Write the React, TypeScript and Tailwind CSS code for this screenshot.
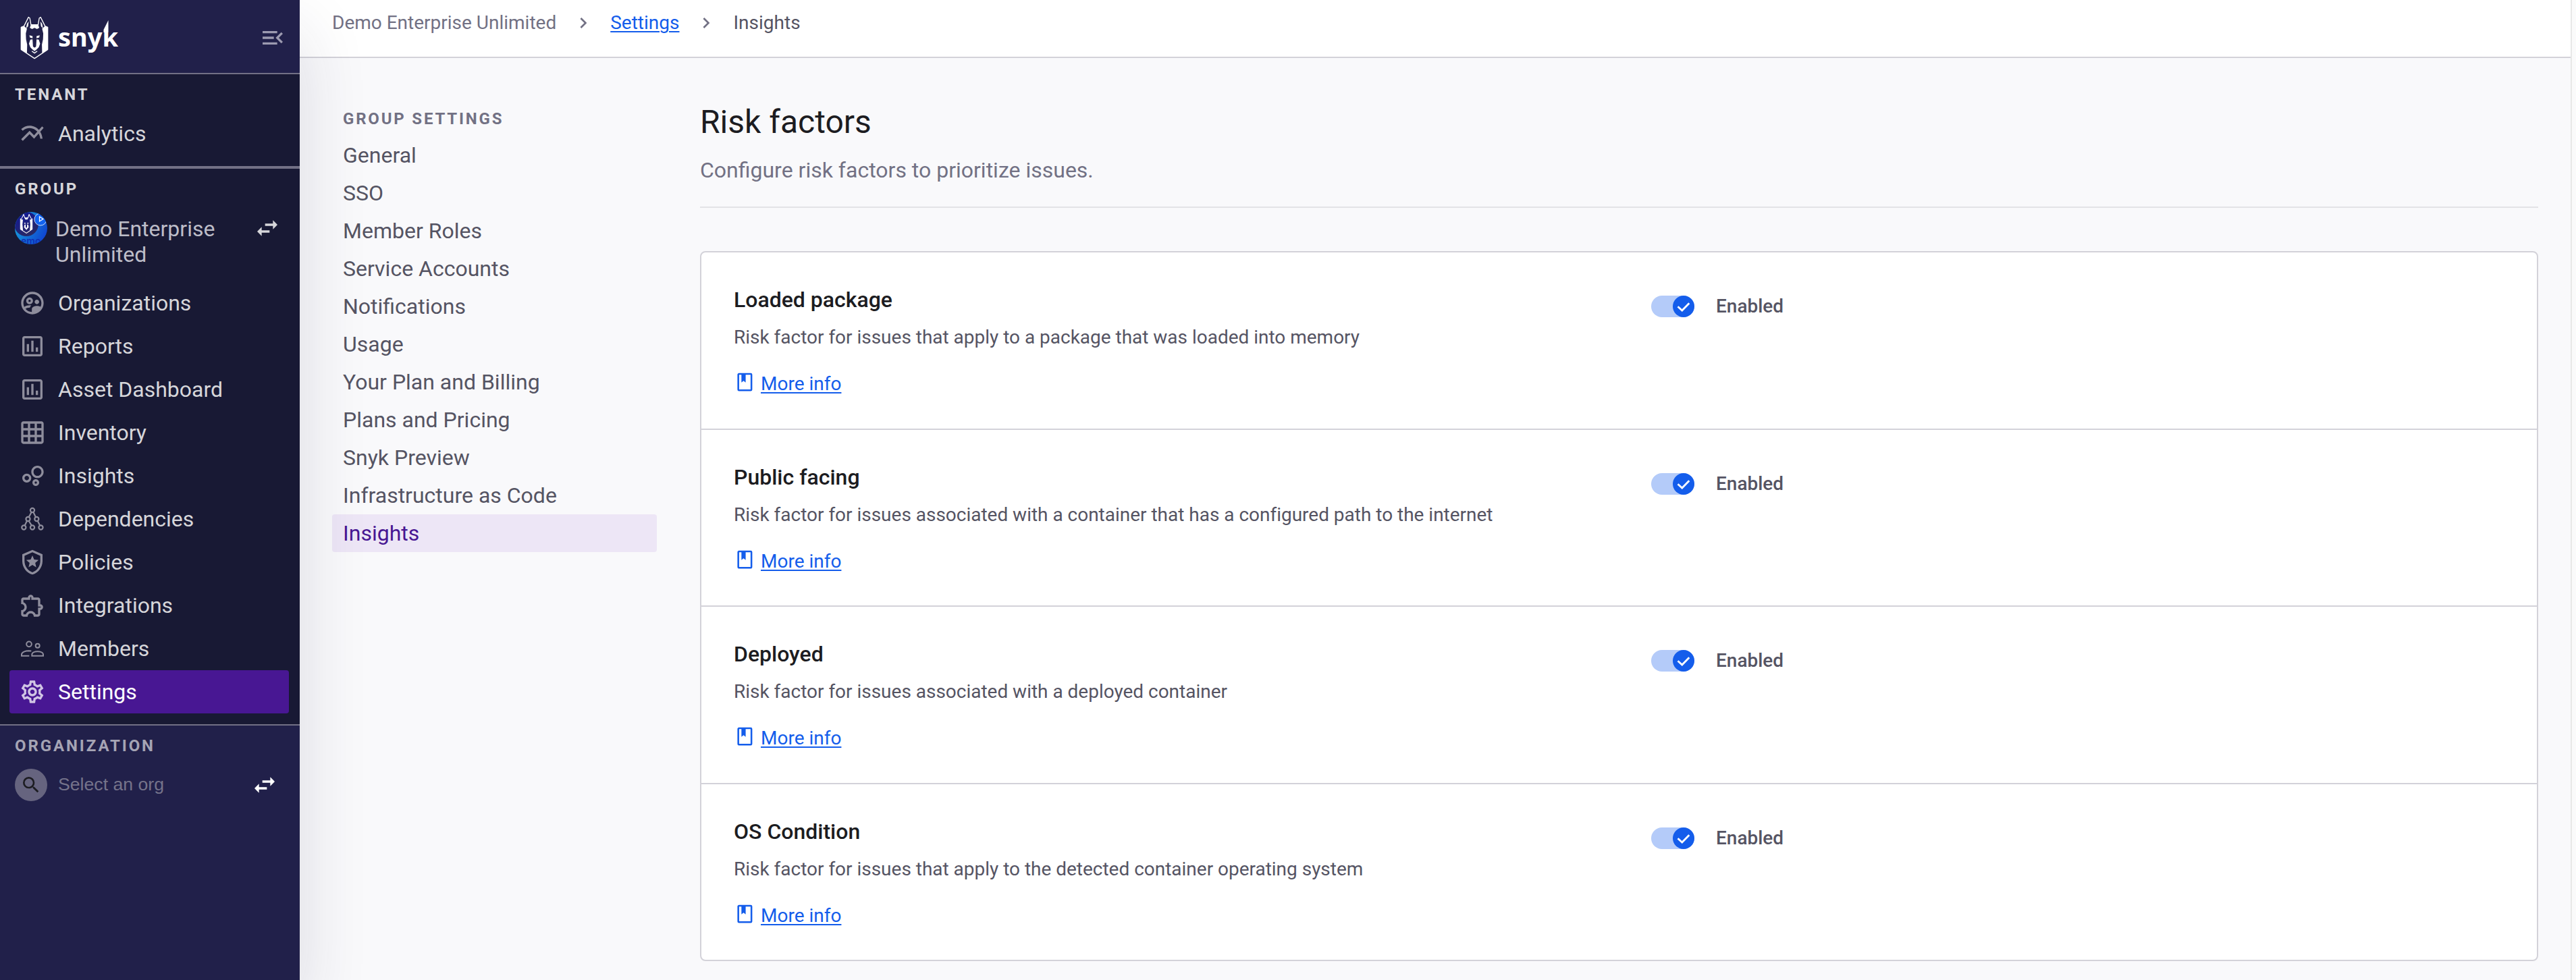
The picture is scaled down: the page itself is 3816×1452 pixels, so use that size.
import React from "react";
import type { IconType } from "react-icons";
import {
  MdChevronRight,
  MdGridOn,
  MdMenuOpen,
  MdMultilineChart,
  MdOutlineBubbleChart,
  MdOutlineExtension,
  MdOutlineInsertChartOutlined,
  MdOutlineLocalPolice,
  MdOutlineSettings,
  MdOutlineSupervisedUserCircle,
  MdSearch,
  MdSwapHoriz,
} from "react-icons/md";

function Hound({ className }: { className?: string }) {
  return (
    <svg viewBox="91 73 127 193" className={className} fill="none" aria-hidden="true">
      <path d="M95 122 L108 117 L128 77 L134 82 L139 111 H171 L176 82 L182 77 L202 117 L214 122 V222 L155 262 L95 222 Z" stroke="#fff" strokeWidth="4" strokeLinejoin="round" />
      <path d="M95 122 L109 117 L121 129 L116 150 L117 176 L122 200 L121 238 L95 222 Z" fill="#fff" />
      <path d="M214 122 L201 117 L189 129 L194 150 L193 176 L188 200 L189 238 L214 222 Z" fill="#fff" />
      <path d="M117 128 L121 107 L129 96 L126 118 Z M193 128 L189 107 L181 96 L184 118 Z" fill="#fff" />
      <path d="M138 112 H172 L176 125 L166 130 L155 125 L144 130 L134 125 Z" fill="#fff" />
      <path d="M132 158 L146 162 V172 L134 168 Z M178 158 L164 162 V172 L176 168 Z" fill="#fff" />
      <path d="M136 178 L146 176 L148 208 Q155 218 162 208 L164 176 L174 178 L180 196 L174 212 L166 220 L155 229 L144 220 L136 212 L130 196 Z" fill="#fff" />
      <path d="M143 229 L155 238 L167 229" stroke="#fff" strokeWidth="4" />
    </svg>
  );
}

function DependencyTree({ className }: { className?: string }) {
  return (
    <svg viewBox="0 0 24 24" className={className} fill="none" stroke="currentColor" strokeWidth="1.3" aria-hidden="true">
      <path d="M11.1 6 L8.9 10.2 M12.9 6 L14.9 10.2 M7.1 13.8 L5.3 17.6 M8.9 13.8 L11.2 17.6 M16.7 13.8 L18.6 17.6" />
      <circle cx="12" cy="4.2" r="1.85" />
      <circle cx="8.1" cy="12" r="1.85" />
      <circle cx="15.8" cy="12" r="1.85" />
      <circle cx="4.4" cy="19.5" r="1.85" />
      <circle cx="12" cy="19.5" r="1.85" />
      <circle cx="19.5" cy="19.5" r="1.85" />
    </svg>
  );
}

function MembersIcon({ className }: { className?: string }) {
  return (
    <svg viewBox="0 0 24 24" className={className} fill="none" stroke="currentColor" strokeWidth="1.2" aria-hidden="true">
      <circle cx="9" cy="8" r="2.3" />
      <circle cx="16.6" cy="9.4" r="1.8" />
      <path d="M9.2 18.4 H2.4 V17.2 C2.4 15 6 13.9 8.8 13.9 L11 14.1" />
      <path d="M11.6 18.4 V17.3 C11.6 15.4 14.2 14.5 16.6 14.5 S21.6 15.4 21.6 17.3 V18.4 Z" />
    </svg>
  );
}

function BookIcon({ className }: { className?: string }) {
  return (
    <svg viewBox="0 0 24 24" className={className} aria-hidden="true">
      <rect x="5" y="3" width="14.6" height="18.2" rx="0.8" fill="none" stroke="currentColor" strokeWidth="1.9" />
      <path d="M8.5 3 H13.2 V12.6 L10.85 10.6 L8.5 12.6 Z" fill="currentColor" />
    </svg>
  );
}

function Wordmark() {
  return (
    <div className="relative ml-[14px] h-[60px] font-['Noto_Sans',sans-serif] text-[38px] leading-[60px] font-bold text-white">
      snyk
      <svg viewBox="0 0 30 24" className="absolute top-0 right-0 h-6 w-[30px]" aria-hidden="true">
        <path d="M4 0 H30 V24 H6 L4 24 Z" fill="#21204a" />
        <path d="M8.5 24 V20 L15.5 6 V24 Z" fill="#fff" />
      </svg>
    </div>
  );
}

function Avatar() {
  return (
    <svg viewBox="0 0 48 48" className="size-12 shrink-0" aria-hidden="true">
      <defs>
        <clipPath id="avatar-clip">
          <circle cx="24" cy="24" r="24" />
        </clipPath>
        <linearGradient id="avatar-bg" x1="0" y1="0.3" x2="1" y2="0.8">
          <stop offset="0" stopColor="#17a0dc" />
          <stop offset="1" stopColor="#0f3fd0" />
        </linearGradient>
        <linearGradient id="avatar-disc" x1="0.2" y1="0" x2="0.7" y2="1">
          <stop offset="0" stopColor="#10189a" />
          <stop offset="1" stopColor="#2a2a60" />
        </linearGradient>
      </defs>
      <g clipPath="url(#avatar-clip)">
        <rect width="48" height="48" fill="url(#avatar-bg)" />
        <circle cx="17" cy="18" r="18" fill="url(#avatar-disc)" />
        <text x="9" y="47.5" fontFamily="Inter, sans-serif" fontSize="14" fontWeight="600" fill="#1030b4">emo</text>
        <circle cx="38" cy="11" r="9" fill="#1263f0" stroke="#fff" strokeWidth="0.8" />
        <path d="M36.5 7 L42 10.5 L36.5 14 Z" fill="none" stroke="#fff" strokeWidth="1.2" />
        <svg x="7.5" y="3" width="19" height="29" viewBox="91 73 127 193">
          <path d="M95 122 L108 117 L128 77 L139 111 H171 L182 77 L202 117 L214 122 V222 L155 262 L95 222 Z" fill="none" stroke="#fff" strokeWidth="7" />
          <path d="M95 122 L121 129 L116 176 L122 238 L95 222 Z M214 122 L189 129 L194 176 L189 238 L214 222 Z M138 112 H172 L166 128 H144 Z" fill="#fff" />
          <path d="M134 160 h12 v10 h-12z M164 160 h12 v10 h-12z M136 180 L147 176 L149 208 H161 L163 176 L174 180 L178 205 L155 232 L132 205 Z" fill="#fff" />
        </svg>
      </g>
    </svg>
  );
}

type IconLike = IconType | React.ComponentType<{ className?: string }>;

function NavRow({ icon: Icon, label, active }: { icon: IconLike; label: string; active?: boolean }) {
  return (
    <a className={`mr-4 ml-3.5 flex h-16 items-center rounded pl-3.5 text-[32px] ${active ? "bg-[#481793] text-white" : "text-[#d6d6da]"}`}>
      <Icon className={`size-10 shrink-0 ${active ? "text-[#d0c4e4]" : "text-[#8e8d9c]"}`} />
      <span className="ml-[18px] whitespace-nowrap">{label}</span>
    </a>
  );
}

function SectionLabel({ children, className }: { children: string; className: string }) {
  return <h2 className={`h-7 text-2xl leading-7 font-bold whitespace-nowrap ${className}`}>{children}</h2>;
}

const groupNav: { icon: IconLike; label: string; active?: boolean }[] = [
  { icon: MdOutlineSupervisedUserCircle, label: "Organizations" },
  { icon: MdOutlineInsertChartOutlined, label: "Reports" },
  { icon: MdOutlineInsertChartOutlined, label: "Asset Dashboard" },
  { icon: MdGridOn, label: "Inventory" },
  { icon: MdOutlineBubbleChart, label: "Insights" },
  { icon: DependencyTree, label: "Dependencies" },
  { icon: MdOutlineLocalPolice, label: "Policies" },
  { icon: MdOutlineExtension, label: "Integrations" },
  { icon: MembersIcon, label: "Members" },
  { icon: MdOutlineSettings, label: "Settings", active: true },
];

const settingsNav = [
  "General",
  "SSO",
  "Member Roles",
  "Service Accounts",
  "Notifications",
  "Usage",
  "Your Plan and Billing",
  "Plans and Pricing",
  "Snyk Preview",
  "Infrastructure as Code",
  "Insights",
];

const riskFactors = [
  { name: "Loaded package", description: "Risk factor for issues that apply to a package that was loaded into memory" },
  { name: "Public facing", description: "Risk factor for issues associated with a container that has a configured path to the internet" },
  { name: "Deployed", description: "Risk factor for issues associated with a deployed container" },
  { name: "OS Condition", description: "Risk factor for issues that apply to the detected container operating system" },
];

function Sidebar() {
  return (
    <aside className="z-10 flex w-[444px] shrink-0 flex-col bg-[#21204a] shadow-[0_48px_96px_rgba(33,32,74,0.14)]">
      <div className="flex h-[110px] items-center border-b-2 border-[#727085] pl-[30px]">
        <Hound className="mt-1 h-16 w-[42px]" />
        <Wordmark />
        <MdMenuOpen className="mt-1 mr-5 ml-auto size-10 text-[#9c9ab0]" />
      </div>

      <section className="border-b-4 border-[#727085] bg-[#181934] pt-4 pb-4">
        <SectionLabel className="mb-3 pl-[22px] tracking-[2.9px] text-[#d6d6da]">TENANT</SectionLabel>
        <NavRow icon={MdMultilineChart} label="Analytics" />
      </section>

      <section className="border-b-2 border-[#727085] bg-[#181934] pt-4 pb-4">
        <SectionLabel className="pl-[22px] tracking-[2.9px] text-[#d6d6da]">GROUP</SectionLabel>
        <div className="mt-5 mb-[21px] flex h-[82px] items-start pl-[22px]">
          <Avatar />
          <span className="mt-1.5 ml-3 w-[260px] text-[32px] leading-[38px] text-[#bdbdc8]">Demo Enterprise Unlimited</span>
          <MdSwapHoriz className="mt-1 mr-7 ml-auto size-10 text-[#d6d6da]" />
        </div>
        <nav className="flex flex-col">
          {groupNav.map((item) => (
            <NavRow key={item.label} {...item} />
          ))}
        </nav>
      </section>

      <section className="pt-4">
        <SectionLabel className="pl-[22px] tracking-[2.9px] text-[#a5a4b4]">ORGANIZATION</SectionLabel>
        <div className="mt-5 flex h-12 items-center pl-[22px]">
          <span className="flex size-12 shrink-0 items-center justify-center rounded-full bg-[#66647f] text-[#1c1c21]">
            <MdSearch className="size-8" />
          </span>
          <span className="ml-4 pb-0.5 font-['Liberation_Sans',sans-serif] text-[26.67px] text-[#75738a]">Select an org</span>
          <MdSwapHoriz className="mr-8 ml-auto size-10 text-white" />
        </div>
      </section>
    </aside>
  );
}

function Breadcrumbs() {
  return (
    <header className="flex h-[86px] items-start border-b-2 border-[#d3d2d9] bg-white pl-12 text-[28px] leading-8">
      <nav className="mt-[18px] flex h-8 items-center whitespace-nowrap text-[#727184]">
        <span>Demo Enterprise Unlimited</span>
        <MdChevronRight className="mx-6 size-8" />
        <a className="text-[#145deb] underline decoration-2 underline-offset-[3px]">Settings</a>
        <MdChevronRight className="mx-6 size-8" />
        <span className="text-[#555463]">Insights</span>
      </nav>
    </header>
  );
}

function Toggle() {
  return (
    <span className="flex h-8 w-16 justify-end rounded-full bg-[#b4cbf9]">
      <span className="flex size-8 items-center justify-center rounded-full bg-[#145deb]">
        <svg viewBox="0 0 32 32" className="size-8" fill="none" stroke="#fff" strokeWidth="2.8" aria-hidden="true">
          <path d="M7.5 16.2 L13.8 22 L24.3 11.2" />
        </svg>
      </span>
    </span>
  );
}

function RiskRow({ name, description }: { name: string; description: string }) {
  return (
    <li className="flex h-[262.6px] border-b-2 border-[#d3d2d9] pl-12 last:h-[260.2px] last:border-b-0">
      <div className="w-[1359px] pt-[50px]">
        <h3 className="h-10 text-[32px] leading-10 font-medium text-[#1c1c21]">{name}</h3>
        <p className="mt-5 h-8 text-[28px] leading-8 tracking-[-0.015px] text-[#555463]">{description}</p>
        <a className="mt-[37px] flex h-8 items-center text-[28px] leading-8 text-[#145deb]">
          <BookIcon className="mb-1.5 size-8" />
          <span className="ml-2 underline decoration-2 underline-offset-[3px]">More info</span>
        </a>
      </div>
      <div className="mt-16 flex h-8 items-center text-[28px] font-medium text-[#555463]">
        <Toggle />
        <span className="ml-8">Enabled</span>
      </div>
    </li>
  );
}

export default function App() {
  return (
    <div className="flex h-[1452px] w-[3816px] overflow-hidden bg-[#f9f9fb] font-['Roboto',sans-serif]">
      <Sidebar />
      <div className="flex min-w-0 flex-1 flex-col">
        <Breadcrumbs />
        <div className="flex flex-1 pr-12 pl-12">
          <nav className="w-[481px] shrink-0 pt-[76px]">
            <SectionLabel className="mb-3 pl-4 tracking-[2.8px] text-[#727184]">GROUP SETTINGS</SectionLabel>
            {settingsNav.map((label) => (
              <a
                key={label}
                className={`flex h-14 items-center rounded pl-4 text-[32px] ${label === "Insights" ? "bg-[#ede6f6] text-[#481793]" : "text-[#555463]"}`}
              >
                {label}
              </a>
            ))}
          </nav>
          <main className="ml-16 flex-1 pt-[67px]">
            <h1 className="h-14 text-5xl leading-[56px] text-[#1c1c21]">Risk factors</h1>
            <p className="mt-[23px] h-10 text-[32px] leading-10 text-[#727184]">Configure risk factors to prioritize issues.</p>
            <hr className="mt-[34px] border-t-2 border-[#e3e3e6]" />
            <ul className="mt-16 rounded-lg border-2 border-[#d3d2d9] bg-white">
              {riskFactors.map((factor) => (
                <RiskRow key={factor.name} {...factor} />
              ))}
            </ul>
          </main>
        </div>
      </div>
      <div className="w-2 shrink-0 border-l-2 border-[#e8e8e8] bg-[#fafafa]" />
    </div>
  );
}
